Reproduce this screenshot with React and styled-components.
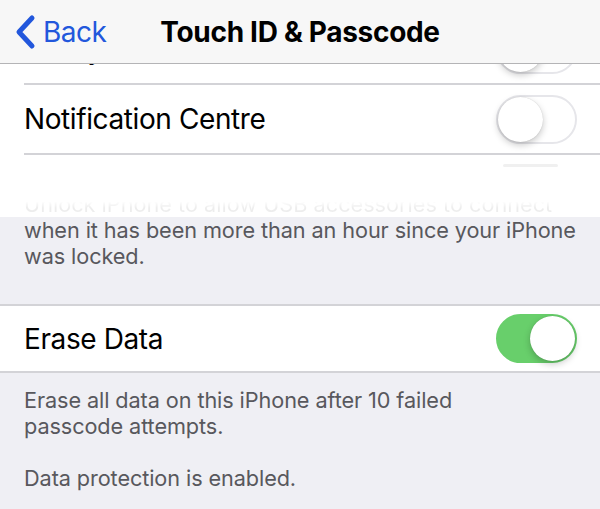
import React from 'react';
import styled, { createGlobalStyle } from 'styled-components';

const Global = createGlobalStyle`
  html, body {
    margin: 0;
    padding: 0;
    background: #efeff4;
    font-family: Inter, "Liberation Sans", sans-serif;
    -webkit-font-smoothing: antialiased;
  }
`

const Page = styled.div`
  width: 600px;
  height: 509px;
  overflow: hidden;
  background: #efeff4;
`

const NavBar = styled.header`
  display: grid;
  grid-template-columns: 1fr auto 1fr;
  align-items: center;
  height: 63px;
  background: #f7f7f7;
  border-bottom: 1px solid #b4b4b6;
`

const BackButton = styled.button`
  display: flex;
  align-items: center;
  gap: 7px;
  padding: 0 0 0 14px;
  border: 0;
  background: none;
  color: #2257dc;
  font: 400 28px Inter, "Liberation Sans", sans-serif;
  letter-spacing: -0.5px;
  justify-self: start;
  cursor: pointer;
`

const Title = styled.h1`
  margin: 0;
  font-size: 28px;
  font-weight: 700;
  letter-spacing: -0.3px;
  color: #000;
`

const RowOuter = styled.div`
  background: #fff;
  padding-left: ${p => (p.$flush ? 0 : 24)}px;
  border-top: ${p => (p.$flush ? '2px solid #d3d3d7' : 'none')};
  border-bottom: ${p => (p.$flush ? '2px solid #d3d3d7' : 'none')};
`

const RowInner = styled.div`
  display: flex;
  align-items: center;
  justify-content: space-between;
  height: ${p => p.$h}px;
  padding: ${p => (p.$flush ? '0 23px 0 24px' : '0 23px 0 0')};
  border-bottom: ${p => (p.$flush ? 'none' : '2px solid #d3d3d7')};
`

const Label = styled.span`
  font-size: 28px;
  letter-spacing: -0.4px;
  color: #000;
`

// top row is scrolled mostly under the nav bar
const ClipBox = styled.div`
  height: 21px;
  overflow: hidden;
  background: #fff;

  & > ${RowOuter} {
    margin-top: -49px;
  }
`

const Track = styled.span`
  display: flex;
  align-items: center;
  justify-content: ${p => (p.$on ? 'flex-end' : 'flex-start')};
  flex-shrink: 0;
  box-sizing: border-box;
  width: 81px;
  height: 49px;
  border-radius: 25px;
  background: ${p => (p.$on ? '#68cf6b' : '#fff')};
  border: 2px solid ${p => (p.$on ? '#68cf6b' : '#e6e6ea')};
`

const Knob = styled.span`
  width: 45px;
  height: 45px;
  border-radius: 50%;
  background: #fff;
  box-shadow: 0 3px 7px rgba(0, 0, 0, 0.22), 0 0 1px rgba(0, 0, 0, 0.2);
`

const FadeBand = styled.div`
  display: flex;
  flex-direction: column;
  justify-content: space-between;
  height: 62px;
  overflow: hidden;
  background: #fff;
  padding: 0 24px;
`

const GhostKnob = styled.span`
  align-self: flex-end;
  width: 55px;
  height: 3px;
  margin: 9px 18px 0 0;
  border-radius: 2px;
  background: rgba(0, 0, 0, 0.06);
`

const GhostText = styled.div`
  font-size: 21.7px;
  line-height: 26px;
  white-space: nowrap;
  color: rgba(0, 0, 0, 0.07);
  -webkit-mask-image: linear-gradient(to bottom, transparent 40%, #000 65%);
  mask-image: linear-gradient(to bottom, transparent 40%, #000 65%);
`

const Footer = styled.div`
  padding: ${p => p.$pad};
  font-size: 21.7px;
  line-height: 26px;
  letter-spacing: -0.1px;
  color: #58585d;
`

const Para = styled.p`
  margin: 0;
  & + & {
    margin-top: 26px;
  }
`

function Toggle({ on }) {
  return (
    <Track $on={on}>
      <Knob />
    </Track>
  );
}

function Chevron() {
  return (
    <svg width="22" height="36" viewBox="0 0 22 36">
      <path d="M18 4 L5 18 L18 32" fill="none" stroke="#2257dc" strokeWidth="5" strokeLinecap="round" strokeLinejoin="round" />
    </svg>
  );
}

export default function App() {
  return (
    <Page>
      <Global />
      <NavBar>
        <BackButton>
          <Chevron />
          Back
        </BackButton>
        <Title>Touch ID &amp; Passcode</Title>
        <span />
      </NavBar>

      <ClipBox>
        <RowOuter>
          <RowInner $h={68}>
            <Label>Today View</Label>
            <Toggle on={false} />
          </RowInner>
        </RowOuter>
      </ClipBox>

      <RowOuter>
        <RowInner $h={68}>
          <Label>Notification Centre</Label>
          <Toggle on={false} />
        </RowInner>
      </RowOuter>

      <FadeBand>
        <GhostKnob />
        <GhostText>Unlock iPhone to allow USB accessories to connect</GhostText>
      </FadeBand>

      <Footer $pad="0 24px 35px">
        <Para>
          when it has been more than an hour since your iPhone
          <br />
          was locked.
        </Para>
      </Footer>

      <RowOuter $flush>
        <RowInner $flush $h={65}>
          <Label>Erase Data</Label>
          <Toggle on />
        </RowInner>
      </RowOuter>

      <Footer $pad="14px 24px 0">
        <Para>
          Erase all data on this iPhone after 10 failed
          <br />
          passcode attempts.
        </Para>
        <Para>Data protection is enabled.</Para>
      </Footer>
    </Page>
  );
}
